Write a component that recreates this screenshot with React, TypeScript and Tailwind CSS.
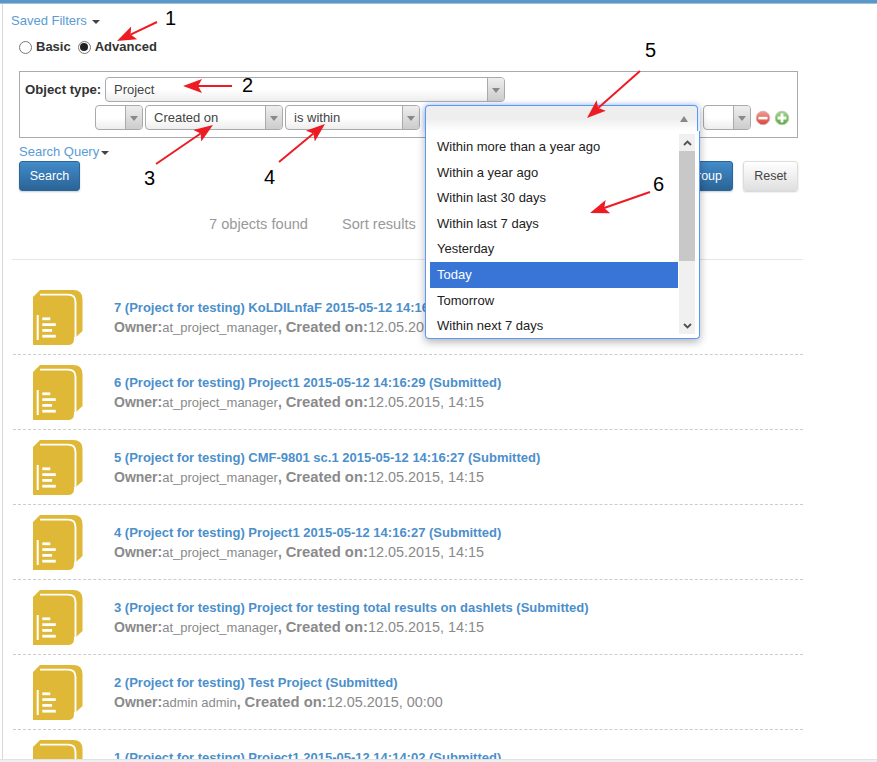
const ff = "font-['Liberation_Sans',Arial,sans-serif]";

function ProjectIcon() {
  return (
    <svg width="50" height="55" viewBox="0 0 50 55" className="shrink-0">
      <path d="M0 7 L7 0 H40 Q49.5 0 49.5 9 V41 L43 47 H41 V49 Q41 55 35 55 H0 Z" fill="#DEB836" />
      <path d="M7 4.6 H35 Q42.5 4.6 42.5 12 V47" fill="none" stroke="#fff" strokeWidth="1.9" />
      <rect x="3.7" y="25" width="2" height="25" fill="#fff" />
      <rect x="9.3" y="27.4" width="8" height="2.8" fill="#fff" />
      <rect x="9.3" y="33.2" width="13.5" height="2.8" fill="#fff" />
      <rect x="9.3" y="39" width="9.8" height="2.8" fill="#fff" />
      <rect x="9.3" y="44.8" width="13.5" height="2.8" fill="#fff" />
    </svg>
  );
}

function SelectBox({ label, width, ml = "" }: { label: string; width: string; ml?: string }) {
  return (
    <div className={`flex h-[25px] ${width} ${ml} shrink-0 rounded-[4px] border border-[#aaa] bg-gradient-to-b from-white from-50% to-[#eee] overflow-hidden`}>
      <div className="flex-1 pl-[8px] text-[13px] leading-[23px] text-[#444] whitespace-nowrap">{label}</div>
      <div className="w-[17px] shrink-0 border-l border-[#aaa] bg-gradient-to-b from-[#eee] to-[#ccc] flex items-center justify-center">
        <div className="mt-[2px] w-0 h-0 border-l-[4px] border-r-[4px] border-t-[5px] border-l-transparent border-r-transparent border-t-[#888]" />
      </div>
    </div>
  );
}

function Caret({ color = "#444" }: { color?: string }) {
  return (
    <span
      className="inline-block w-0 h-0 border-l-[4px] border-r-[4px] border-t-[4px] border-l-transparent border-r-transparent align-middle"
      style={{ borderTopColor: color }}
    />
  );
}

function Row({ title, owner, created, last }: { title: string; owner: string; created: string; last?: boolean }) {
  return (
    <div className={`flex h-[75px] shrink-0 ${last ? "" : "border-b border-dashed border-[#ccc]"}`}>
      <div className="w-[101px] shrink-0 pl-[20px] pt-[10px]">
        <ProjectIcon />
      </div>
      <div className="pt-[18px]">
        <div className="text-[13px] leading-[20px] font-bold text-[#4b8fcb] whitespace-nowrap">{title}</div>
        <div className="-mt-[1px] text-[13px] leading-[20px] text-[#8a8a8a] whitespace-nowrap">
          <b className="text-[14px]">Owner:</b>
          {owner}
          <b className="text-[14px]">, </b>
          <b className="text-[14.8px]">Created on:</b>
          <span className="text-[14.4px]">{created}</span>
        </div>
      </div>
    </div>
  );
}

function Arrow({ x1, y1, x2, y2 }: { x1: number; y1: number; x2: number; y2: number }) {
  const a = Math.atan2(y2 - y1, x2 - x1);
  const len = 19;
  const w = 7;
  const bx = x2 - Math.cos(a) * len;
  const by = y2 - Math.sin(a) * len;
  const nx = -Math.sin(a);
  const ny = Math.cos(a);
  const ix = x2 - Math.cos(a) * (len - 4);
  const iy = y2 - Math.sin(a) * (len - 4);
  const pts = `${x2},${y2} ${bx + nx * w},${by + ny * w} ${ix},${iy} ${bx - nx * w},${by - ny * w}`;
  return (
    <g>
      <line x1={x1} y1={y1} x2={ix} y2={iy} stroke="#ED1C24" strokeWidth="2" />
      <polygon points={pts} fill="#ED1C24" />
    </g>
  );
}

const options = [
  "Within more than a year ago",
  "Within a year ago",
  "Within last 30 days",
  "Within last 7 days",
  "Yesterday",
  "Today",
  "Tomorrow",
  "Within next 7 days",
];

const rows = [
  { title: "7 (Project for testing) KoLDILnfaF 2015-05-12 14:16:30 (Submitted)", owner: "at_project_manager", created: "12.05.2015, 14:15" },
  { title: "6 (Project for testing) Project1 2015-05-12 14:16:29 (Submitted)", owner: "at_project_manager", created: "12.05.2015, 14:15" },
  { title: "5 (Project for testing) CMF-9801 sc.1 2015-05-12 14:16:27 (Submitted)", owner: "at_project_manager", created: "12.05.2015, 14:15" },
  { title: "4 (Project for testing) Project1 2015-05-12 14:16:27 (Submitted)", owner: "at_project_manager", created: "12.05.2015, 14:15" },
  { title: "3 (Project for testing) Project for testing total results on dashlets (Submitted)", owner: "at_project_manager", created: "12.05.2015, 14:15" },
  { title: "2 (Project for testing) Test Project (Submitted)", owner: "admin admin", created: "12.05.2015, 00:00" },
  { title: "1 (Project for testing) Project1 2015-05-12 14:14:02 (Submitted)", owner: "at_project_manager", created: "12.05.2015, 14:14" },
];

const numbers = [
  { n: "1", cls: "left-[165px] top-[6px]" },
  { n: "2", cls: "left-[242px] top-[73px]" },
  { n: "3", cls: "left-[144px] top-[166px]" },
  { n: "4", cls: "left-[264px] top-[165px]" },
  { n: "5", cls: "left-[645px] top-[38px]" },
  { n: "6", cls: "left-[653px] top-[172px]" },
];

export default function App() {
  return (
    <div className={`relative w-[877px] h-[762px] overflow-hidden bg-white ${ff}`}>
      <div className="h-[4px] bg-[#5b98c7] border-b border-[#9cc0dc]" />
      <div className="ml-[2px] h-[755px] border-l border-[#d8d8d8] overflow-hidden">
        <div className="pl-[8px] pt-[9px] text-[13px] leading-[15px] text-[#5a9bd5]">
          Saved Filters <span className="ml-[2px]"><Caret /></span>
        </div>
        <div className="ml-[16px] mt-[10px] flex items-center h-[18px] text-[13px] font-bold text-[#333]">
          <span className="w-[13px] h-[13px] rounded-full border border-[#777] bg-white" />
          <span className="ml-[4px]">Basic</span>
          <span className="ml-[7px] w-[13px] h-[13px] rounded-full border border-[#777] bg-white flex items-center justify-center">
            <span className="w-[8px] h-[8px] rounded-full bg-[#222]" />
          </span>
          <span className="ml-[4px]">Advanced</span>
        </div>
        <div className="ml-[16px] mt-[15px] w-[779px] h-[67px] border border-[#aaa] pt-[5px]">
          <div className="flex items-center">
            <div className="pl-[5px] w-[85px] text-[13.2px] font-bold text-[#333] whitespace-nowrap">Object type:</div>
            <SelectBox label="Project" width="w-[400px]" />
          </div>
          <div className="flex items-center mt-[3px] pl-[75px]">
            <SelectBox label="" width="w-[48px]" />
            <SelectBox label="Created on" width="w-[138px]" ml="ml-[2px]" />
            <SelectBox label="is within" width="w-[135px]" ml="ml-[2px]" />
            <div className="w-[277px] shrink-0" />
            <SelectBox label="" width="w-[48px]" ml="ml-[6px]" />
            <svg width="16" height="16" viewBox="0 0 16 16" className="ml-[4px]">
              <defs>
                <linearGradient id="redBall" x1="0" y1="0" x2="0" y2="1">
                  <stop offset="0" stopColor="#F29B92" />
                  <stop offset="1" stopColor="#D9443C" />
                </linearGradient>
              </defs>
              <circle cx="8" cy="8" r="6.8" fill="url(#redBall)" stroke="#D6B5B2" />
              <rect x="3.5" y="6.8" width="9" height="2.6" fill="#fff" />
            </svg>
            <svg width="16" height="16" viewBox="0 0 16 16" className="ml-[3px]">
              <defs>
                <linearGradient id="greenBall" x1="0" y1="0" x2="0" y2="1">
                  <stop offset="0" stopColor="#A5D68E" />
                  <stop offset="1" stopColor="#58A83D" />
                </linearGradient>
              </defs>
              <circle cx="8" cy="8" r="6.8" fill="url(#greenBall)" stroke="#B8CFAE" />
              <path d="M3.6 8h8.8M8 3.6v8.8" stroke="#fff" strokeWidth="2.8" />
            </svg>
          </div>
        </div>
        <div className="ml-[16px] mt-[6px] text-[13px] leading-[15px] text-[#5a9bd5]">
          Search Query<span className="ml-[2px]"><Caret /></span>
        </div>
        <div className="relative ml-[16px] mt-[2px] w-[779px] h-[30px] flex justify-between">
          <div className="w-[61px] h-[30px] rounded-[3px] bg-gradient-to-b from-[#428bca] to-[#2a6496] border border-[#2b669a] text-[12.5px] leading-[28px] text-white text-center shadow-[0_1px_2px_rgba(0,0,0,0.2)]">
            Search
          </div>
          <div className="flex">
            <div className="w-[70px] h-[30px] rounded-[3px] bg-gradient-to-b from-[#428bca] to-[#2a6496] border border-[#2b669a] text-[12.5px] leading-[28px] text-white text-right pr-[10px] shadow-[0_1px_2px_rgba(0,0,0,0.2)]">
              roup
            </div>
            <div className="ml-[10px] w-[55px] h-[30px] rounded-[3px] bg-gradient-to-b from-white to-[#e0e0e0] border border-[#ddd] text-[12.5px] leading-[28px] text-[#444] text-center shadow-[0_1px_2px_rgba(0,0,0,0.2)]">
              Reset
            </div>
          </div>
        </div>
        <div className="mt-[23px] flex h-[20px] text-[14.6px] leading-[20px] text-[#999] pl-[206px]">
          <span>7 objects found</span>
          <span className="ml-[34px]">Sort results</span>
        </div>
        <div className="ml-[9px] mt-[25px] w-[791px] border-t border-[#e6e6e6]" />
        <div className="ml-[10px] mt-[20px] w-[790px]">
          {rows.map((r, i) => (
            <Row key={r.title} {...r} last={i === rows.length - 1} />
          ))}
        </div>
      </div>
      <div className="absolute left-0 right-0 bottom-0 h-[3px] bg-[#f0f0f0] border-t border-[#e2e2e2]" />

      <div className="absolute left-[425px] top-[105px] w-[275px] h-[234px] shadow-[0_3px_8px_rgba(0,0,0,0.3)] rounded-[4px]">
        <div className="absolute left-0 top-0 w-[273px] h-[26px] rounded-t-[4px] border border-b-0 border-[#5897fb] bg-gradient-to-b from-[#eee] from-50% to-white shadow-[0_0_5px_rgba(88,151,251,0.5)] flex items-center justify-end pr-[9px]">
          <div className="w-0 h-0 border-l-[4px] border-r-[4px] border-b-[6px] border-l-transparent border-r-transparent border-b-[#888]" />
        </div>
        <div className="absolute left-0 top-[26px] w-[275px] h-[208px] bg-white border border-t-0 border-[#5897fb] rounded-b-[4px] pl-[4px] flex">
          <div className="w-[248px] pt-[3px]">
            {options.map((o) => (
              <div
                key={o}
                className={`h-[25.6px] pl-[7px] text-[13px] leading-[25px] whitespace-nowrap ${
                  o === "Today" ? "bg-[#3875d7] text-white" : "text-[#222]"
                }`}
              >
                {o}
              </div>
            ))}
          </div>
          <div className="ml-[1px] mt-[3px] w-[16px] h-[200px] bg-[#f0f0f0] flex flex-col">
            <div className="h-[17px] flex items-center justify-center">
              <svg width="9" height="6" viewBox="0 0 9 6">
                <path d="M1 5l3.5-3.5L8 5" fill="none" stroke="#505050" strokeWidth="1.8" />
              </svg>
            </div>
            <div className="h-[110px] bg-[#c8c8c8]" />
            <div className="flex-1 flex items-end justify-center pb-[5px]">
              <svg width="9" height="6" viewBox="0 0 9 6">
                <path d="M1 1l3.5 3.5L8 1" fill="none" stroke="#505050" strokeWidth="1.8" />
              </svg>
            </div>
          </div>
        </div>
      </div>

      <svg className="absolute inset-0" width="877" height="762">
        <Arrow x1={157} y1={22} x2={117} y2={41} />
        <Arrow x1={232} y1={86} x2={183} y2={86} />
        <Arrow x1={156} y1={164} x2={213} y2={125} />
        <Arrow x1={279} y1={162} x2={325} y2={124} />
        <Arrow x1={640} y1={71} x2={587} y2={118} />
        <Arrow x1={650} y1={192} x2={590} y2={213} />
      </svg>
      {numbers.map((d) => (
        <div key={d.n} className={`absolute ${d.cls} text-[20px] leading-[24px] text-black`}>
          {d.n}
        </div>
      ))}
    </div>
  );
}
